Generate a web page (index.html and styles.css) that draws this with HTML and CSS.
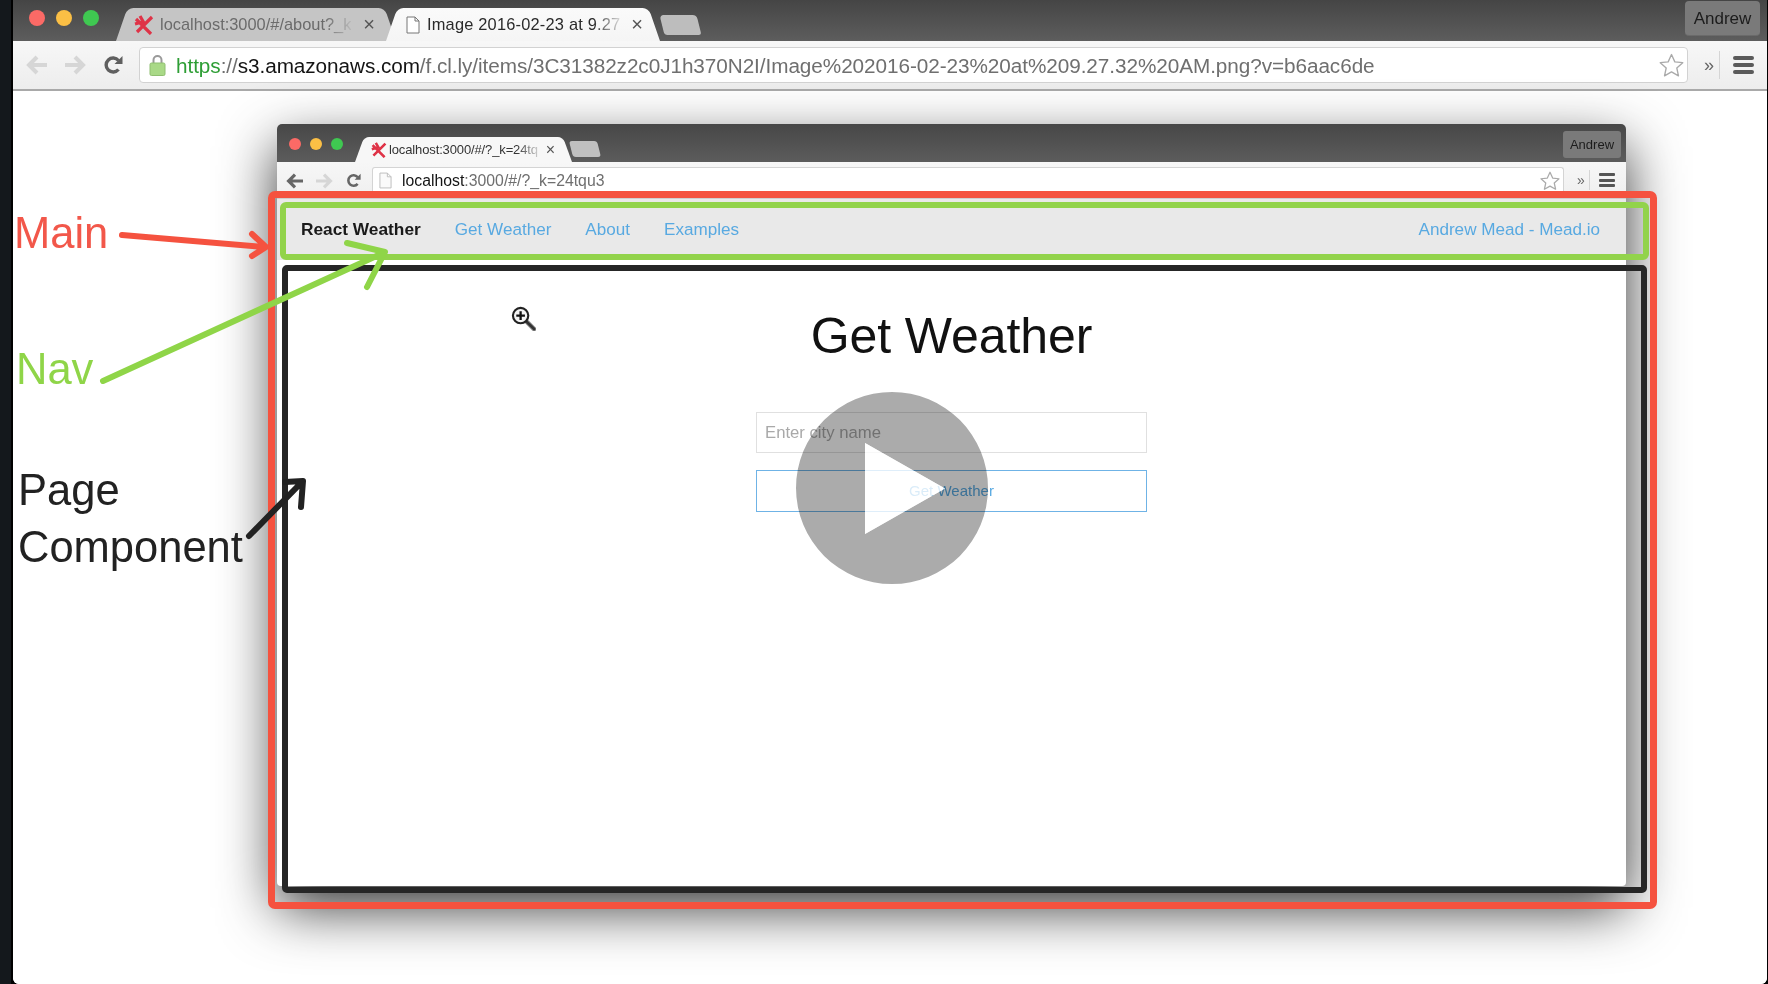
FILE: index.html
```html
<!DOCTYPE html>
<html lang="en">
<head>
<meta charset="utf-8">
<title>React Weather - Main, Nav and Page Component</title>
<link rel="stylesheet" href="styles.css">
</head>
<body>
<div class="video">
  <div class="strip"></div>
  <div class="screen">
    <header class="titlebar">
      <div class="lights">
        <span class="light red"></span><span class="light yellow"></span><span class="light green"></span>
      </div>
      <div class="tabs">
        <div class="tab tab-back">
          <svg class="fav" viewBox="0 0 20 20"><path d="M2 4l15 15M18 2L3 17M6 1l4 7M1 9l7-2" fill="none" stroke="#df3347" stroke-width="3.2"/></svg>
          <span class="tab-text">localhost:3000/#/about?_k</span>
          <span class="tab-x">×</span>
        </div>
        <div class="tab tab-front">
          <svg class="doc" viewBox="0 0 14 18"><path d="M1 1h8l4 4v12H1zM9 1v4h4" fill="#fff" stroke="#777" stroke-width="1"/></svg>
          <span class="tab-text">Image 2016-02-23 at 9.27</span>
          <span class="tab-x">×</span>
        </div>
        <div class="newtab"></div>
      </div>
      <div class="avatar">Andrew</div>
    </header>
    <nav class="toolbar">
      <svg class="ico arrow" viewBox="0 0 22 20"><path d="M21 10H4M11 2l-8 8 8 8" fill="none" stroke="#d6d6d6" stroke-width="4"/></svg>
      <svg class="ico arrow" viewBox="0 0 22 20"><path d="M1 10h17M11 2l8 8-8 8" fill="none" stroke="#d6d6d6" stroke-width="4"/></svg>
      <svg class="ico reload" viewBox="0 0 20 20"><path d="M15.5 14.5a7 7 0 1 1 0-9" fill="none" stroke="#5f5f5f" stroke-width="3.4"/><path d="M19.5 1v8h-8z" fill="#5f5f5f"/></svg>
      <div class="omnibox">
        <svg class="lock" viewBox="0 0 16 22"><path d="M4 10V6a4 4 0 0 1 8 0v4" fill="none" stroke="#9a9a9a" stroke-width="2"/><rect x="0.5" y="9" width="15" height="12.5" rx="1.5" fill="#a9d987" stroke="#8fbf70"/></svg>
        <span class="url"><span class="scheme">https</span>://<span class="host">s3.amazonaws.com</span>/f.cl.ly/items/3C31382z2c0J1h370N2I/Image%202016-02-23%20at%209.27.32%20AM.png?v=b6aac6de</span>
        <svg class="star" viewBox="0 0 24 24"><path d="M12 1.5l3.2 7 7.6.8-5.7 5.1 1.6 7.5L12 18.1l-6.7 3.8 1.6-7.5L1.2 9.3l7.6-.8z" fill="#fff" stroke="#aaa" stroke-width="1.3" stroke-linejoin="round"/></svg>
      </div>
      <span class="more">»</span>
      <span class="divider"></span>
      <div class="burger"><i></i><i></i><i></i></div>
    </nav>
    <main class="page">
      <section class="window">
        <header class="w-titlebar">
          <div class="w-lights">
            <span class="w-light red"></span><span class="w-light yellow"></span><span class="w-light green"></span>
          </div>
          <div class="w-tab">
            <svg class="w-fav" viewBox="0 0 20 20"><path d="M2 4l15 15M18 2L3 17M6 1l4 7M1 9l7-2" fill="none" stroke="#df3347" stroke-width="3.2"/></svg>
            <span class="w-tab-text">localhost:3000/#/?_k=24tq</span>
            <span class="w-tab-x">×</span>
          </div>
          <div class="w-newtab"></div>
          <div class="w-avatar">Andrew</div>
        </header>
        <div class="w-toolbar">
          <svg class="w-ico" viewBox="0 0 22 20"><path d="M21 10H4M11 2l-8 8 8 8" fill="none" stroke="#666" stroke-width="4"/></svg>
          <svg class="w-ico" viewBox="0 0 22 20"><path d="M1 10h17M11 2l8 8-8 8" fill="none" stroke="#d6d6d6" stroke-width="4"/></svg>
          <svg class="w-ico w-reload" viewBox="0 0 20 20"><path d="M15.5 14.5a7 7 0 1 1 0-9" fill="none" stroke="#666" stroke-width="3.4"/><path d="M19.5 1v8h-8z" fill="#666"/></svg>
          <div class="w-omnibox">
            <svg class="w-doc" viewBox="0 0 14 18"><path d="M1 1h8l4 4v12H1zM9 1v4h4" fill="#fafafa" stroke="#bbb" stroke-width="1"/></svg>
            <span class="w-url"><span class="host">localhost</span>:3000/#/?_k=24tqu3</span>
            <svg class="w-star" viewBox="0 0 24 24"><path d="M12 1.5l3.2 7 7.6.8-5.7 5.1 1.6 7.5L12 18.1l-6.7 3.8 1.6-7.5L1.2 9.3l7.6-.8z" fill="#fff" stroke="#aaa" stroke-width="1.5" stroke-linejoin="round"/></svg>
          </div>
          <span class="w-more">»</span>
          <span class="w-divider"></span>
          <div class="w-burger"><i></i><i></i><i></i></div>
        </div>
        <div class="topbar">
          <strong class="brand">React Weather</strong>
          <a class="link">Get Weather</a>
          <a class="link">About</a>
          <a class="link">Examples</a>
          <a class="link link-right">Andrew Mead - Mead.io</a>
        </div>
        <div class="content">
          <h1 class="title">Get Weather</h1>
          <div class="field">Enter city name</div>
          <div class="button">Get Weather</div>
        </div>
      </section>
    </main>
  </div>

  <div class="box box-red"></div>
  <div class="box box-green"></div>
  <div class="box box-black"></div>

  <div class="label label-main">Main</div>
  <div class="label label-nav">Nav</div>
  <div class="label label-page">Page<br>Component</div>

  <svg class="arrows" viewBox="0 0 1768 984">
    <path d="M122 235L263 247M252 234l14 13-14 9" class="a-red"/>
    <path d="M103 381L383 253M347 243l38 9-18 35" class="a-green"/>
    <path d="M249 536L300 484M285 482l18-1-2 26" class="a-black"/>
  </svg>

  <svg class="zoomcur" viewBox="0 0 26 26">
    <path d="M15 15l9 9" stroke="#999" stroke-width="5" stroke-linecap="round"/>
    <path d="M15 15l9 9" stroke="#333" stroke-width="3" stroke-linecap="round"/>
    <circle cx="10" cy="10" r="8" fill="#f4f4f4" stroke="#222" stroke-width="2.2"/>
    <path d="M5.5 10h9M10 5.5v9" stroke="#111" stroke-width="2.4"/>
  </svg>

  <div class="play"></div>
  <div class="triangle"></div>
</div>
</body>
</html>
```
FILE: styles.css
```css
* { box-sizing: border-box; }
html, body { margin: 0; height: 100%; background: #000; overflow: hidden; }
body { font-family: "Liberation Sans", Arial, sans-serif; }

.video { position: relative; display: flex; width: 1768px; height: 984px; background: #000; filter: blur(0.45px); }
.strip { width: 13px; flex: none; background: #14181c; border-right: 2.5px solid #000; }
.screen { flex: 1; margin-right: 1px; display: flex; flex-direction: column; background: #fff; border-radius: 0 0 6px 6px; overflow: hidden; }

/* outer chrome */
.titlebar { flex: none; height: 41px; display: flex; align-items: flex-start; background: linear-gradient(#454545, #5d5d5d); }
.lights { display: flex; gap: 11px; padding: 10px 0 0 16px; width: 103px; flex: none; }
.light { width: 16px; height: 16px; border-radius: 50%; }
.red { background: #fb6a66; }
.yellow { background: #fbbf45; }
.green { background: #3fc851; }
.tabs { display: flex; align-items: flex-end; height: 41px; }
.tab { position: relative; height: 33px; display: flex; align-items: center; font-size: 16.4px; }
.tab > * { position: relative; z-index: 1; }
.tab::before, .tab::after { content: ""; position: absolute; top: 0; bottom: 0; width: 52%; z-index: 0; }
.tab::before { left: 0; transform-origin: 0 100%; transform: skewX(-19deg); border-radius: 6px 0 0 0; }
.tab::after { right: 0; transform-origin: 100% 100%; transform: skewX(19deg); border-radius: 0 6px 0 0; }
.tab-back { width: 280px; padding: 0 20px 0 18px; color: #6b6b6b; }
.tab-back::before, .tab-back::after { background: #c5c5c5; }
.tab-front { width: 274px; margin-left: -10px; padding: 0 16px 0 20px; color: #2a2a2a; }
.tab-front .tab-text { letter-spacing: 0.2px; }
.tab-front::before, .tab-front::after { background: linear-gradient(#fafafa, #f5f5f5); }
.fav { width: 20px; height: 20px; flex: none; margin-right: 6px; }
.doc { width: 14px; height: 18px; flex: none; margin-right: 7px; }
.tab-text { flex: none; white-space: nowrap; -webkit-mask-image: linear-gradient(90deg, #000 86%, rgba(0,0,0,.15)); mask-image: linear-gradient(90deg, #000 86%, rgba(0,0,0,.15)); }
.tab-x { width: 14px; margin-left: auto; font-size: 20px; text-align: center; color: #555; }
.newtab { width: 37px; height: 20px; margin: 0 0 6px 2px; background: #bdbdbd; transform: skewX(14deg); border-radius: 4px 4px 3px 3px; }
.avatar { margin: 1px 7px 0 auto; width: 75px; height: 35px; line-height: 35px; text-align: center; font-size: 17px; color: #1c1c1c; background: #7a7a7a; border-radius: 4px; border-bottom: 1px solid #6a6a6a; }

.toolbar { flex: none; height: 50px; display: flex; align-items: center; padding-left: 13px; background: linear-gradient(#f7f7f7, #ededed); border-bottom: 2px solid #a9a9a9; }
.ico { flex: none; }
.arrow { width: 22px; height: 20px; margin-right: 16px; }
.reload { width: 20px; height: 20px; margin: 0 16px 0 1px; }
.omnibox { width: 1549px; height: 36px; flex: none; display: flex; align-items: center; padding: 0 3px 0 9px; background: #fff; border: 1px solid #d2d2d2; border-radius: 4px; }
.lock { width: 17px; height: 22px; flex: none; margin-right: 10px; }
.url { padding-top: 2px; font-size: 20.72px; letter-spacing: -0.06px; color: #6f6f6f; white-space: nowrap; }
.scheme { color: #2e9e35; }
.host { color: #141414; }
.star { width: 25px; height: 25px; margin-left: auto; }
.more { width: 14px; margin-left: 16px; font-size: 18px; color: #666; }
.divider { width: 1px; height: 28px; margin-left: 1px; background: #d5d5d5; }
.burger { display: flex; flex-direction: column; gap: 3px; width: 21px; margin-left: 13px; }
.burger i { display: block; height: 4px; border-radius: 2px; background: #5a5a5a; }

/* inner window */
.page { flex: 1; padding: 33px 0 0 264px; background: #fff; }
.window { width: 1349px; height: 762px; display: flex; flex-direction: column; background: #fff; border-radius: 5px 5px 4px 4px; box-shadow: 0 22px 56px rgba(0, 0, 0, 0.8); }
.w-titlebar { flex: none; height: 38px; display: flex; align-items: flex-start; background: linear-gradient(#474747, #5c5c5c); border-radius: 5px 5px 0 0; }
.w-lights { flex: none; width: 78px; display: flex; gap: 9px; padding: 14px 0 0 12px; }
.w-light { width: 12px; height: 12px; border-radius: 50%; }
.w-tab { position: relative; flex: none; width: 217px; height: 25px; margin-top: 13px; display: flex; align-items: center; padding: 0 17px 0 16px; font-size: 13px; color: #333; }
.w-tab > * { position: relative; z-index: 1; }
.w-tab::before, .w-tab::after { content: ""; position: absolute; top: 0; bottom: 0; width: 52%; background: #f7f7f7; z-index: 0; }
.w-tab::before { left: 0; transform-origin: 0 100%; transform: skewX(-20deg); border-radius: 5px 0 0 0; }
.w-tab::after { right: 0; transform-origin: 100% 100%; transform: skewX(20deg); border-radius: 0 5px 0 0; }
.w-fav { width: 16px; height: 16px; flex: none; margin-right: 2px; }
.w-tab-text { flex: none; width: 152px; white-space: nowrap; letter-spacing: -0.13px; -webkit-mask-image: linear-gradient(90deg, #000 84%, rgba(0,0,0,.1)); mask-image: linear-gradient(90deg, #000 84%, rgba(0,0,0,.1)); }
.w-tab-x { margin-left: auto; font-size: 16px; color: #555; }
.w-newtab { flex: none; width: 28px; height: 16px; margin: 17px 0 0 -1px; background: #c0c0c0; transform: skewX(14deg); border-radius: 3px; }
.w-avatar { margin: 7px 5px 0 auto; width: 58px; height: 27px; line-height: 28px; text-align: center; font-size: 13px; color: #1c1c1c; background: #7a7a7a; border-radius: 3px; }

.w-toolbar { flex: none; height: 36px; display: flex; align-items: flex-start; padding: 5px 0 0 9px; background: linear-gradient(#f7f7f7, #efefef); }
.w-ico { width: 18px; height: 16px; margin: 6px 11px 0 0; flex: none; }
.w-reload { width: 15px; height: 15px; margin-right: 11px; margin-left: 2px; }
.w-omnibox { flex: none; width: 1192px; height: 31px; display: flex; align-items: center; padding: 0 3px 5px 6px; background: #fff; border: 1px solid #d4d4d4; border-bottom: 0; border-radius: 3px 3px 0 0; }
.w-doc { width: 13px; height: 17px; flex: none; margin-right: 10px; }
.w-url { font-size: 15.8px; color: #6f6f6f; white-space: nowrap; }
.w-star { width: 20px; height: 20px; margin-left: auto; }
.w-more { margin: 5px 0 0 13px; font-size: 14px; color: #666; }
.w-divider { width: 1px; height: 20px; margin: 3px 0 0 4px; background: #d5d5d5; }
.w-burger { display: flex; flex-direction: column; gap: 2.5px; width: 16px; margin: 6px 0 0 9px; }
.w-burger i { display: block; height: 3px; border-radius: 1px; background: #555; }

.topbar { flex: none; height: 62px; display: flex; align-items: center; gap: 34px; padding: 0 26px 0 24px; background: #e9e9e9; border-top: 1px solid #cfcfcf; font-size: 17.1px; }
.brand { color: #1a1a1a; font-weight: 700; font-size: 17.3px; }
.link { color: #58a9e1; }
.link-right { margin-left: auto; }

.content { flex: 1; display: flex; flex-direction: column; align-items: center; }
.title { margin: 47px 0 47px; font-size: 50px; line-height: 58px; font-weight: 400; color: #111; letter-spacing: -0.1px; }
.field { width: 391px; height: 41px; line-height: 39px; padding: 0 8px; border: 1.5px solid #e0e0e0; color: #a9a9a9; font-size: 16.7px; background: #fff; }
.button { width: 391px; height: 42px; line-height: 39px; margin-top: 17px; text-align: center; font-size: 15px; color: #58a9e1; border: 1.5px solid #6fb3e6; background: #fff; }

/* annotation layer */
.box { position: absolute; }
.box-red { left: 268px; top: 191px; width: 1389px; height: 718px; border: 7px solid #f5523f; border-radius: 7px; }
.box-green { left: 280px; top: 202px; width: 1369px; height: 58px; border: 6.5px solid #92d34b; border-radius: 6px; }
.box-black { left: 282px; top: 265px; width: 1365px; height: 628px; border: 6px solid #262626; border-radius: 5px; }

.label { position: absolute; font-size: 43.5px; line-height: 57px; white-space: nowrap; }
.label-main { left: 14px; top: 205px; color: #f2574a; }
.label-nav { left: 16px; top: 341px; color: #8fd548; }
.label-page { left: 18px; top: 462px; color: #222; }

.arrows { position: absolute; left: 0; top: 0; width: 1768px; height: 984px; pointer-events: none; }
.arrows path { fill: none; stroke-width: 6px; stroke-linecap: round; stroke-linejoin: round; }
.a-red { stroke: #f5523f; }
.a-green { stroke: #8fd548; }
.a-black { stroke: #222; }

.zoomcur { position: absolute; left: 511px; top: 306px; width: 25px; height: 25px; }

.play { position: absolute; left: 796px; top: 392px; width: 192px; height: 192px; background: rgba(0, 0, 0, 0.33); clip-path: path(evenodd, "M0 96a96 96 0 1 0 192 0a96 96 0 1 0-192 0ZM69 51L149 96.5L69 142Z"); }
.triangle { position: absolute; left: 865px; top: 443px; width: 80px; height: 91px; background: rgba(255, 255, 255, 0.78); clip-path: polygon(0 0, 100% 50%, 0 100%); }
```
